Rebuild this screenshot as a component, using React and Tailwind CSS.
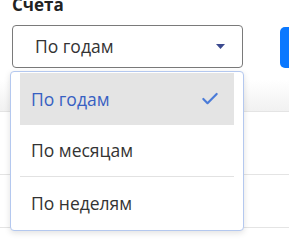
import { Check } from 'lucide-react'

export default function App() {
  return (
    <div className="relative w-[289px] h-[241px] overflow-hidden bg-white font-['Open_Sans',sans-serif] text-[#333]">
      {/* label */}
      <div className="pl-3 -mt-[5px] text-[17px] leading-5 font-bold text-[#222]">Счета</div>

      {/* select row */}
      <div className="flex items-start gap-[37px] pl-3 mt-[10px]">
        <div className="flex items-center justify-between w-[231px] h-[43px] shrink-0 rounded-[4px] border border-[#7a7a7a] pl-[22px] pr-[17px]">
          <span className="text-[17.5px]">По годам</span>
          <svg width="9" height="5" viewBox="0 0 9 5">
            <path d="M0 0h9L4.5 5z" fill="#3b4a8f" />
          </svg>
        </div>
        <div className="w-[40px] h-[41px] mt-[2px] shrink-0 rounded-[5px] bg-[#0a78ff]" />
      </div>

      {/* table behind */}
      <div className="mt-[12px] h-[32px] bg-gradient-to-b from-white to-[#f1f1f1] border-b border-[#e4e4e4]" />
      <div className="h-[63px] border-b border-[#e4e4e4]" />
      <div className="h-[53px] border-b border-[#e4e4e4]" />

      {/* dropdown menu */}
      <div className="absolute left-[10px] top-[71px] w-[234px] h-[160px] rounded-[4px] border border-[#b4c8ef] bg-white shadow-[0_2px_6px_rgba(0,0,0,0.12)] py-[1px] text-[17.5px]">
        <div className="mx-[9px] h-[52px] flex items-center justify-between bg-[#e4e4e4] pl-[11px] pr-[14px] text-[#3760c2]">
          <span>По годам</span>
          <Check size={20} strokeWidth={2.6} className="text-[#4a7bd8]" />
        </div>
        <div className="mx-[9px] h-[52px] flex items-center pl-[11px] border-b border-[#e2e2e2]">
          По месяцам
        </div>
        <div className="mx-[9px] h-[52px] flex items-center pl-[11px]">
          По неделям
        </div>
      </div>
    </div>
  )
}
